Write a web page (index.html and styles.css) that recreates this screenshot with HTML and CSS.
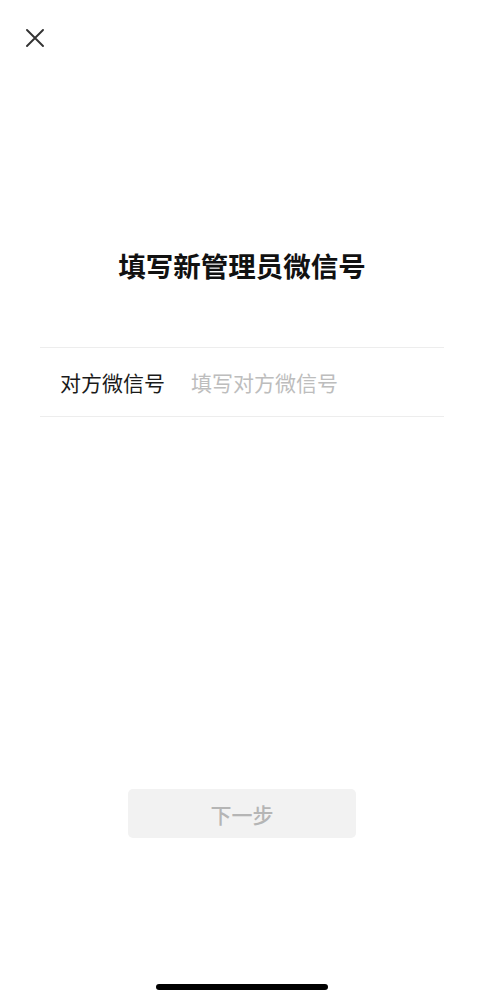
FILE: index.html
```html
<!DOCTYPE html>
<html lang="zh-CN">
<head>
<meta charset="utf-8">
<title>填写新管理员微信号</title>
<link rel="stylesheet" href="styles.css">
</head>
<body>
<div class="page">
  <div class="top">
    <svg class="close" width="18" height="18" viewBox="0 0 18 18" aria-label="关闭">
      <path d="M1 1 L17 17 M17 1 L1 17" stroke="#333" stroke-width="1.9" stroke-linecap="round" fill="none"/>
    </svg>
  </div>
  <h1 class="title">填写新管理员微信号</h1>
  <div class="field">
    <label class="label" for="wx">对方微信号</label>
    <input class="input" id="wx" type="text" placeholder="填写对方微信号">
  </div>
  <button class="next" type="button">下一步</button>
  <div class="home"></div>
</div>
</body>
</html>
```
FILE: styles.css
```css
html, body {
  margin: 0;
  padding: 0;
  background: #ffffff;
}
body {
  font-family: "Noto Sans CJK SC", "Noto Sans", sans-serif;
}
.page {
  width: 484px;
  height: 1000px;
  display: flex;
  flex-direction: column;
  overflow: hidden;
}
.top {
  padding: 29px 0 0 26px;
  height: 18px;
}
.close {
  display: block;
}
.title {
  margin: 200px 0 0;
  font-size: 27.5px;
  line-height: 36px;
  font-weight: 700;
  color: #111111;
  text-align: center;
}
.field {
  margin: 64px 40px 0;
  height: 68px;
  border-top: 1px solid #ededed;
  border-bottom: 1px solid #ededed;
  display: flex;
  align-items: center;
}
.label {
  width: 131px;
  padding-left: 20px;
  font-size: 21px;
  color: #1a1a1a;
  flex: none;
}
.input {
  flex: 1;
  min-width: 0;
  border: 0;
  outline: 0;
  padding: 0;
  margin: 0;
  background: transparent;
  font-family: inherit;
  font-size: 21px;
  color: #1a1a1a;
}
.input::placeholder {
  color: #bdbdbd;
}
.next {
  margin: 372px auto 0;
  width: 228px;
  height: 49px;
  border: 0;
  border-radius: 5px;
  background: #f2f2f2;
  color: #b5b5b5;
  font-family: inherit;
  font-size: 21px;
  font-weight: 500;
  padding: 0;
}
.home {
  margin: 146px auto 0;
  width: 172px;
  height: 6px;
  border-radius: 3px;
  background: #000000;
}
```
